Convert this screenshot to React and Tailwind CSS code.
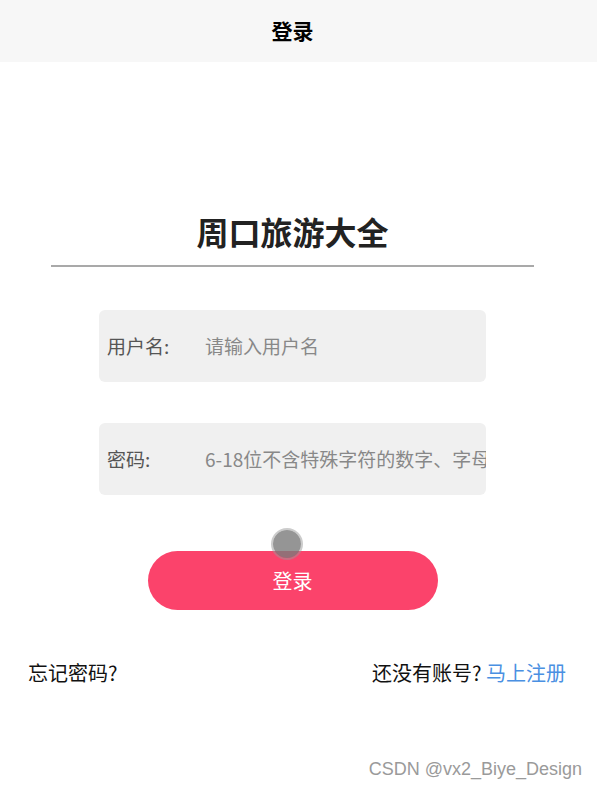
export default function App() {
  const font = { fontFamily: '"Noto Sans CJK SC", "Noto Sans", sans-serif' };
  return (
    <div className="relative w-[597px] h-[789px] bg-white overflow-hidden" style={font}>
      <div className="h-[62px] bg-[#f7f7f7]">
        <div className="w-[585px] h-full flex items-center justify-center">
          <span className="text-[21px] font-bold text-black">登录</span>
        </div>
      </div>
      <div className="w-[585px]">
        <div className="mt-[149px] flex flex-col items-center">
          <h1 className="text-[32px] font-bold leading-[40px] text-[#222]">周口旅游大全</h1>
          <div className="mt-[14px] w-[483px] h-[2px] bg-[#a9a9a9]" />
          <div className="mt-[43px] w-[387px] h-[72px] rounded-[6px] bg-[#f0f0f0] flex items-center pl-[8px]">
            <span className="w-[98px] text-[19px] text-[#555]">用户名:</span>
            <span className="text-[19px] text-[#888]">请输入用户名</span>
          </div>
          <div className="mt-[41px] w-[387px] h-[72px] rounded-[6px] bg-[#f0f0f0] flex items-center pl-[8px] overflow-hidden whitespace-nowrap">
            <span className="w-[98px] shrink-0 text-[19px] text-[#555]">密码:</span>
            <span className="text-[19px] text-[#888]">6-18位不含特殊字符的数字、字母</span>
          </div>
          <div className="relative mt-[56px]">
            <button className="w-[290px] h-[59px] rounded-full bg-[#fb436b] text-white text-[20px] flex items-center justify-center">
              登录
            </button>
            <div className="absolute left-[125px] top-[-21px] w-[28px] h-[28px] rounded-full bg-[#7a7a7a]/80 ring-2 ring-[#9a9a9a]/50" />
          </div>
        </div>
        <div className="mt-[50px] flex justify-between pl-[28px] pr-[19px] text-[20px] leading-[26px] text-[#111]">
          <span>忘记密码?</span>
          <span>
            还没有账号? <span className="text-[#4a90e2]">马上注册</span>
          </span>
        </div>
      </div>
      <div
        className="absolute right-[15px] top-[757px] text-[18px] leading-[24px] text-[#9a9a9a]"
        style={{ fontFamily: '"Liberation Sans", Arial, sans-serif' }}
      >
        CSDN @vx2_Biye_Design
      </div>
    </div>
  );
}
